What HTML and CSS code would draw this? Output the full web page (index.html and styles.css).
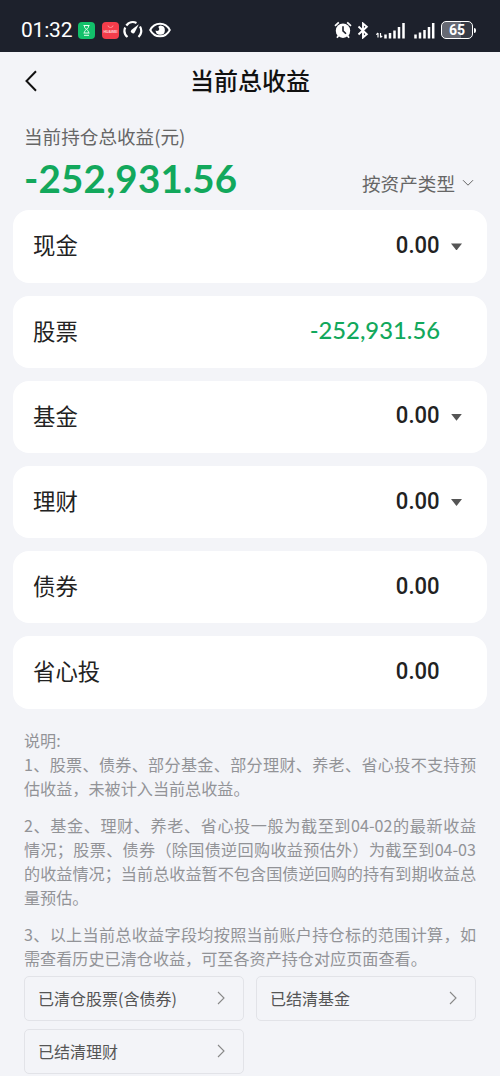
FILE: index.html
```
<!DOCTYPE html>
<html lang="zh-CN">
<head>
    <meta charset="UTF-8">
    <meta name="viewport" content="width=device-width, initial-scale=1.0">
    <title>当前总收益</title>
    <link rel="stylesheet" href="styles.css">
</head>
<body>
    <div class="status-bar">
        <span class="time">01:32</span>
        <svg class="app-green" width="17" height="17" viewBox="0 0 17 17">
            <rect width="17" height="17" rx="4" fill="#12c06a"/>
            <path d="M5.500 3.500h6M6.500 4c0 2.500 1.200 2.600 2 3.300.8-.7 2-.8 2-3.300M6.500 10.700c0-2.200 1.200-2.600 2-3.400.8.8 2 1.200 2 3.400M5.500 11h6M6 13.300h5" fill="none" stroke="#e9fff2" stroke-width="1"/>
        </svg>
        <svg class="app-red" width="17" height="17" viewBox="0 0 17 17">
            <rect width="17" height="17" rx="4" fill="#f33d4b"/>
            <path d="M6 3.500a2.500 2 0 0 0 5 0" fill="none" stroke="#ff9fa4" stroke-width=".8"/>
            <text x="8.500" y="10.700" text-anchor="middle" class="app-name">HUAWEI</text>
        </svg>
        <svg class="gauge" width="20" height="18" viewBox="0 0 20 18">
            <path d="M4.500 16A8.200 8.200 0 0 1 2.200 6.500M3.300 4.500A8.200 8.200 0 0 1 13.500 2M17 5.500A8.200 8.200 0 0 1 15.500 16" fill="none" stroke="#fff" stroke-width="2.200"/>
            <path d="M15.800 3.200L11.800 11.300A2.100 2.100 0 1 1 8.300 9z" fill="#fff"/>
        </svg>
        <svg class="eye" width="22" height="16" viewBox="0 0 22 16">
            <path d="M1.200 8C5.500-.4 16.500-.4 20.800 8 16.500 16.400 5.500 16.400 1.200 8z" fill="none" stroke="#fff" stroke-width="1.900"/>
            <path d="M11.500 3.400a4.700 4.700 0 1 1-5 5.200c1.800 1 3.600.2 3.700-1.300.1-1.300-.5-1.800-1-2.300a4.600 4.600 0 0 1 2.300-1.600z" fill="#fff"/>
        </svg>
        <span class="spacer"></span>
        <svg class="alarm" width="18" height="18" viewBox="0 0 18 18">
            <circle cx="9" cy="9.700" r="7.200" fill="#fff"/>
            <path d="M1 4.800L4.800 1.300M17 4.800l-3.800-3.500M4.500 14.500l-1.500 2.300M13.500 14.500l1.500 2.300" stroke="#fff" stroke-width="1.700" fill="none"/>
            <path d="M9 5.200v4.600l3 3" stroke="#1d212c" stroke-width="1.600" fill="none"/>
        </svg>
        <svg class="bluetooth" width="12" height="17" viewBox="0 0 12 17">
            <path d="M1.500 4.500L9.800 12.300 6 15.500V1.500l3.800 3.200L1.500 12.500" fill="none" stroke="#fff" stroke-width="1.900"/>
        </svg>
        <svg class="signal-data" width="29" height="17" viewBox="0 0 29 17">
            <path d="M2 15.500v-4.500M.3 12.700L2 11M4.500 11v4.500M6.200 13.800l-1.700 1.700" fill="none" stroke="#fff" stroke-width="1.200"/>
            <path d="M9.500 16.500v-4M14 16.500v-5.500M18.500 16.500V8.500M23 16.500V5M27.500 16.500V1" stroke="#fff" stroke-width="2.500"/>
        </svg>
        <svg class="signal" width="21" height="17" viewBox="0 0 21 17">
            <path d="M1.500 16.500v-4M6 16.500v-6M10.500 16.500V8M15 16.500V5M19.200 16.500V1" stroke="#fff" stroke-width="2.500"/>
        </svg>
        <span class="battery">65</span>
        <span class="battery-tip"></span>
    </div>

    <div class="nav">
        <svg class="back" width="14" height="22" viewBox="0 0 14 22">
            <path d="M12 1.200L2.500 11l9.500 9.800" fill="none" stroke="#111" stroke-width="2"/>
        </svg>
        <h1>当前总收益</h1>
    </div>

    <div class="summary">
        <div>
            <p class="summary-label">当前持仓总收益(元)</p>
            <p class="summary-value">-252,931.56</p>
        </div>
        <div class="filter">
            按资产类型
            <svg width="12" height="8" viewBox="0 0 12 8">
                <path d="M1 1.200l5 5 5-5" fill="none" stroke="#666" stroke-width="1"/>
            </svg>
        </div>
    </div>

    <div class="list">
        <div class="card">
            <span class="name">现金</span><span class="amount zero">0.00</span><i class="arrow"></i>
        </div>
        <div class="card">
            <span class="name">股票</span><span class="amount loss">-252,931.56</span>
        </div>
        <div class="card">
            <span class="name">基金</span><span class="amount zero">0.00</span><i class="arrow"></i>
        </div>
        <div class="card">
            <span class="name">理财</span><span class="amount zero">0.00</span><i class="arrow"></i>
        </div>
        <div class="card">
            <span class="name">债券</span><span class="amount zero">0.00</span>
        </div>
        <div class="card">
            <span class="name">省心投</span><span class="amount zero">0.00</span>
        </div>
    </div>

    <div class="notes">
        <p class="notes-title">说明:</p>
        <p>1、股票、债券、部分基金、部分理财、养老、省心投不支持预估收益，未被计入当前总收益。</p>
        <p>2、基金、理财、养老、省心投一般为截至到04-02的最新收益情况；股票、债券（除国债逆回购收益预估外）为截至到04-03的收益情况；当前总收益暂不包含国债逆回购的持有到期收益总量预估。</p>
        <p>3、以上当前总收益字段均按照当前账户持仓标的范围计算，如需查看历史已清仓收益，可至各资产持仓对应页面查看。</p>
    </div>

    <div class="links">
        <a class="link">已清仓股票(含债券)
            <svg width="8" height="14" viewBox="0 0 8 14"><path d="M1 1l6 6-6 6" fill="none" stroke="#888" stroke-width="1.100"/></svg>
        </a>
        <a class="link">已结清基金
            <svg width="8" height="14" viewBox="0 0 8 14"><path d="M1 1l6 6-6 6" fill="none" stroke="#888" stroke-width="1.100"/></svg>
        </a>
        <a class="link">已结清理财
            <svg width="8" height="14" viewBox="0 0 8 14"><path d="M1 1l6 6-6 6" fill="none" stroke="#888" stroke-width="1.100"/></svg>
        </a>
    </div>
</body>
</html>
```
FILE: styles.css
```
* {
    box-sizing: border-box;
}

body, h1, p {
    margin: 0;
    padding: 0;
}

body {
    font-family: "Noto Sans CJK SC", sans-serif;
    background-color: #f3f4f8;
    height: 1076px;
    overflow: hidden;
}

.status-bar {
    display: flex;
    align-items: center;
    height: 52px;
    padding: 8px 24px 0 21px;
    background-color: #1d212c;
    color: #ffffff;
}

.time {
    width: 57px;
    font-family: Roboto, sans-serif;
    font-size: 21px;
    line-height: 24px;
    letter-spacing: -0.2px;
}

.app-red {
    margin-left: 7px;
}

.app-name {
    font: bold 3.5px "Liberation Sans", sans-serif;
    fill: #ffd5d8;
}

.gauge {
    margin-left: 4px;
}

.eye {
    margin-left: 6px;
}

.spacer {
    flex: 1;
}

.bluetooth {
    margin-left: 5px;
}

.signal-data {
    margin-left: 7px;
}

.signal {
    margin-left: 9px;
}

.battery {
    width: 32px;
    height: 18px;
    margin-left: 6px;
    border: 1.5px solid #ffffff;
    border-radius: 5px;
    background: linear-gradient(to right, #666973 65%, #363a44 65%);
    font: bold 14px/17px Roboto, sans-serif;
    text-align: center;
}

.battery-tip {
    width: 2px;
    height: 5px;
    margin-left: 1px;
    border-radius: 0 2px 2px 0;
    background-color: #ffffff;
}

.nav {
    display: grid;
    grid-template-columns: 14px 1fr 14px;
    align-items: center;
    height: 58px;
    padding: 0 24px;
}

.nav h1 {
    padding-bottom: 2px;
    font-size: 24px;
    font-weight: 500;
    line-height: 56px;
    text-align: center;
    color: #111111;
}

.summary {
    display: flex;
    justify-content: space-between;
    align-items: flex-end;
    height: 100.4px;
    padding: 13px 26px 0 24px;
}

.summary > div:first-child {
    align-self: flex-start;
}

.summary-label {
    font-size: 18.6px;
    line-height: 26px;
    color: #666666;
}

.summary-value {
    font-family: Lato, sans-serif;
    font-size: 38.5px;
    font-weight: 700;
    line-height: 58px;
    letter-spacing: 0.2px;
    white-space: nowrap;
    color: #12a85c;
}

.filter {
    display: flex;
    align-items: center;
    gap: 7px;
    padding-bottom: 14px;
    font-size: 18.6px;
    line-height: 26px;
    color: #666666;
}

.list {
    display: flex;
    flex-direction: column;
    gap: 13px;
    padding: 0 13px;
}

.card {
    display: flex;
    align-items: center;
    height: 72.2px;
    padding: 0 47px 3px 20px;
    border-radius: 16px;
    background-color: #ffffff;
}

.name {
    flex: 1;
    padding-bottom: 1px;
    font-size: 22.4px;
    line-height: 32px;
    color: #222222;
}

.amount {
    font-family: Roboto, sans-serif;
    font-size: 25px;
    line-height: 32px;
    color: #222222;
}

.zero {
    font-size: 24.5px;
    font-weight: 500;
    transform: scaleX(0.9);
    transform-origin: right;
}

.loss {
    font-family: Lato, sans-serif;
    font-size: 23.8px;
    font-weight: 500;
    color: #12a85c;
}

.arrow {
    width: 11px;
    height: 7px;
    margin: 4px -22px 0 11px;
    background-color: #555555;
    clip-path: polygon(0 0, 100% 0, 50% 100%);
}

.notes {
    padding: 19.6px 24px 0;
    font-size: 16.12px;
    line-height: 24px;
    text-align: justify;
    color: #929397;
}

.notes p + p {
    margin-top: 13px;
}

.notes .notes-title + p {
    margin-top: 0;
}

.links {
    display: grid;
    grid-template-columns: 1fr 1fr;
    gap: 8px 12px;
    padding: 6px 24px 0;
}

.link {
    display: flex;
    justify-content: space-between;
    align-items: center;
    height: 45px;
    padding: 0 18px 1px 13px;
    border: 1px solid #e2e3e8;
    border-radius: 5px;
    font-size: 16px;
    color: #555555;
}
```
